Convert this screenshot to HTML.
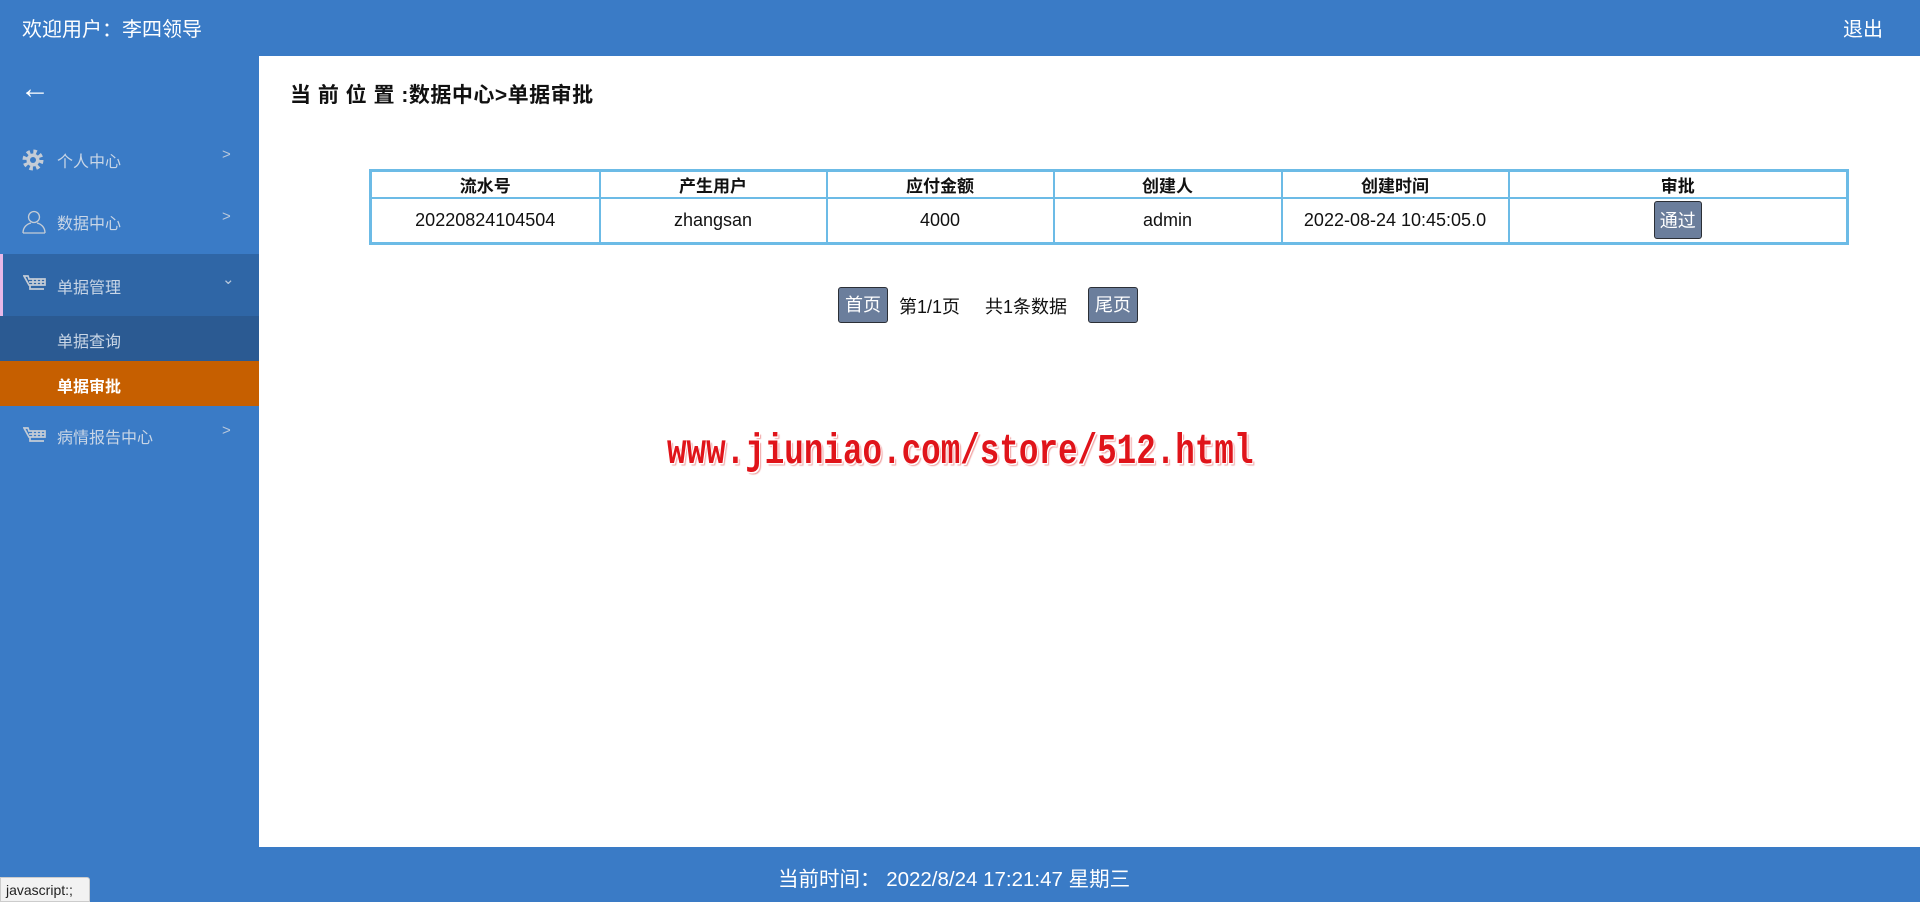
<!DOCTYPE html>
<html><head><meta charset="utf-8"><style>
*{margin:0;padding:0;box-sizing:border-box}
body{width:1920px;height:902px;position:relative;overflow:hidden;background:#3a7bc6;font-family:"Liberation Sans","Noto Sans CJK SC",sans-serif}
.a{position:absolute;white-space:nowrap}
.main{position:absolute;left:259px;top:56px;width:1661px;height:791px;background:#fff}
.si{position:absolute;left:0;width:259px;color:#c9d6e6;font-size:16px}
.si span.t{position:absolute;left:57px}
.chev{position:absolute;left:222px;font-size:15px;color:#b8c8dc}
table{position:absolute;left:369px;top:169px;width:1480px;border-collapse:collapse;border:3px solid #6cbbe6;font-size:18px}
td,th{border:2px solid #6cbbe6;text-align:center;color:#111}
th{height:27px;font-weight:bold;font-size:17px}
td{height:45px}
.btn{display:inline-block;background:#6b7e9c;color:#fff;border:1px solid #2b2f36;border-radius:3px}
</style></head><body>
<div class="a" style="left:22px;top:13px;font-size:20px;color:#fff">欢迎用户：李四领导</div>
<div class="a" style="left:1843px;top:13px;font-size:20px;color:#fff">退出</div>
<div class="a" style="left:20px;top:72px;font-size:30px;color:#fff;font-weight:bold">&#8592;</div>

<div class="si" style="top:140px;height:40px">
<svg class="a" style="left:21px;top:8px" width="24" height="24" viewBox="0 0 24 24"><circle cx="12" cy="12" r="8" fill="none" stroke="#c4ccd6" stroke-width="5" stroke-dasharray="3.2 3.1"/><circle cx="12" cy="12" r="6.5" fill="#c4ccd6"/><circle cx="12" cy="12" r="3" fill="#3a7bc6"/></svg>
<span class="t" style="top:8px">个人中心</span><span class="chev" style="top:6px">&gt;</span></div>
<div class="si" style="top:202px;height:40px">
<svg class="a" style="left:21px;top:7px" width="26" height="26" viewBox="0 0 26 26" fill="none" stroke="#c4ccd6" stroke-width="1.3"><circle cx="13" cy="8" r="5.5"/><path d="M2 24c0-6 4-9 8-10M24 24c0-6-4-9-8-10M2 24h22"/></svg>
<span class="t" style="top:8px">数据中心</span><span class="chev" style="top:6px">&gt;</span></div>
<div class="si" style="top:254px;height:62px;background:#2f66a6;border-left:3px solid #e8b8e8">
<span class="t" style="left:54px;top:20px">单据管理</span><span class="chev" style="left:219px;top:16px">&#8964;</span></div>
<div class="si" style="top:316px;height:45px;background:#2b5a92"><span class="t" style="top:12px">单据查询</span></div>
<div class="si" style="top:361px;height:45px;background:#c65f00;color:#fff;font-weight:bold"><span class="t" style="top:12px">单据审批</span></div>
<div class="si" style="top:416px;height:40px">
<span class="t" style="top:8px">病情报告中心</span><span class="chev" style="top:6px">&gt;</span></div>
<svg class="a" style="left:23px;top:275px" width="24" height="18" viewBox="0 0 24 18" fill="none" stroke="#c4ccd6" stroke-width="1.7"><path d="M1 1h4l1 3h16v6H6zM10 4v6M14 4v6M18 4v6M6 7h16M7 10v4h14"/></svg>
<svg class="a" style="left:23px;top:427px" width="24" height="18" viewBox="0 0 24 18" fill="none" stroke="#c4ccd6" stroke-width="1.7"><path d="M1 1h4l1 3h16v6H6zM10 4v6M14 4v6M18 4v6M6 7h16M7 10v4h14"/></svg>

<div class="main"></div>
<div class="a" style="left:290px;top:79px;font-size:21px;font-weight:bold;color:#111;letter-spacing:0.5px">当 前 位 置 :数据中心&gt;单据审批</div>
<table>
<tr><th style="width:229px">流水号</th><th style="width:227px">产生用户</th><th style="width:227px">应付金额</th><th style="width:228px">创建人</th><th style="width:227px">创建时间</th><th>审批</th></tr>
<tr><td>20220824104504</td><td>zhangsan</td><td>4000</td><td>admin</td><td>2022-08-24 10:45:05.0</td><td><span class="btn" style="padding:5px 5px;font-size:18px">通过</span></td></tr>
</table>
<div class="a btn" style="left:838px;top:287px;width:50px;height:36px;font-size:18px;line-height:34px;text-align:center">首页</div>
<div class="a" style="left:899px;top:293px;font-size:18px;color:#111">第1/1页</div>
<div class="a" style="left:985px;top:293px;font-size:18px;color:#111">共1条数据</div>
<div class="a btn" style="left:1088px;top:287px;width:50px;height:36px;font-size:18px;line-height:34px;text-align:center">尾页</div>
<div class="a" style="left:667px;top:428px;font-family:'Liberation Mono',monospace;font-weight:bold;font-size:32.6px;color:#e0141a;transform:scaleY(1.3);transform-origin:left top;text-shadow:1px 1px 0 #fff,-1px -1px 0 #fff,2px 2px 1px #f0a0a0">www.jiuniao.com/store/512.html</div>
<div class="a" style="left:778px;top:862px;font-size:20.5px;color:#fff">当前时间：&nbsp;2022/8/24 17:21:47 星期三</div>
<div class="a" style="left:0;top:877px;width:90px;height:25px;background:#f2f2f2;border:1px solid #ccc;border-radius:0 3px 0 0;font-size:14px;color:#222;padding:4px 5px">javascript:;</div>
</body></html>
